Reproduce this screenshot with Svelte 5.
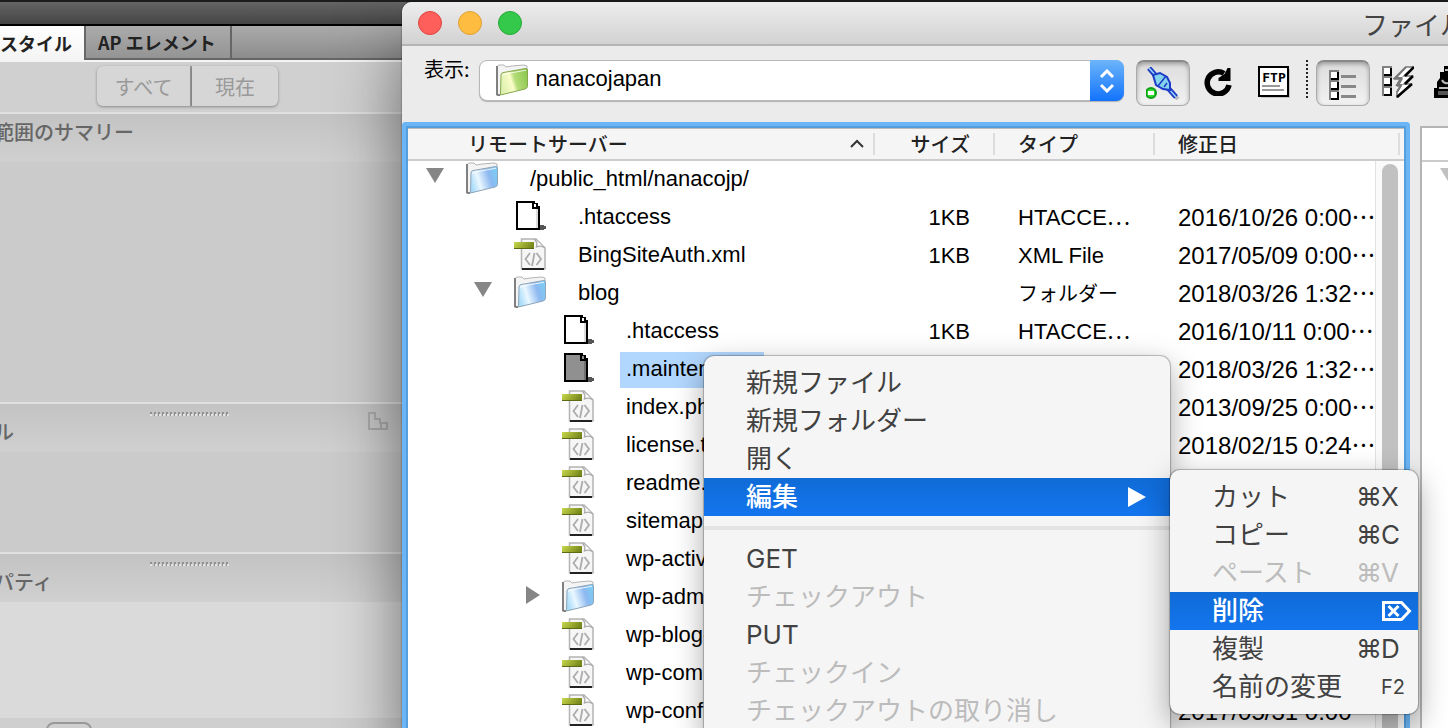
<script lang="ts">
    type Kind = "folder" | "blank" | "code";

    type Entry = {
        name: string;
        kind: Kind;
        level: number;
        open?: boolean;
        size?: string;
        type?: string;
        date?: string;
        selected?: boolean;
    };

    type Command = {
        label: string;
        key?: string;
        disabled?: boolean;
    };

    const entries: Entry[] = [
        { name: "/public_html/nanacojp/", kind: "folder", level: 0, open: true },
        { name: ".htaccess", kind: "blank", level: 1, size: "1KB", type: "HTACCE⋯", date: "2016/10/26 0:00⋯" },
        { name: "BingSiteAuth.xml", kind: "code", level: 1, size: "1KB", type: "XML File", date: "2017/05/09 0:00⋯" },
        { name: "blog", kind: "folder", level: 1, open: true, type: "フォルダー", date: "2018/03/26 1:32⋯" },
        { name: ".htaccess", kind: "blank", level: 2, size: "1KB", type: "HTACCE⋯", date: "2016/10/11 0:00⋯" },
        { name: ".maintenance", kind: "blank", level: 2, selected: true, date: "2018/03/26 1:32⋯" },
        { name: "index.php", kind: "code", level: 2, date: "2013/09/25 0:00⋯" },
        { name: "license.txt", kind: "code", level: 2, date: "2018/02/15 0:24⋯" },
        { name: "readme.html", kind: "code", level: 2 },
        { name: "sitemap.xml", kind: "code", level: 2 },
        { name: "wp-activate.php", kind: "code", level: 2 },
        { name: "wp-admin", kind: "folder", level: 2, open: false },
        { name: "wp-blog-header.php", kind: "code", level: 2 },
        { name: "wp-comments-post.php", kind: "code", level: 2 },
        { name: "wp-config.php", kind: "code", level: 2, date: "2017/05/31 0:00⋯" },
    ];

    const fileCommands: Command[] = [
        { label: "新規ファイル" },
        { label: "新規フォルダー" },
        { label: "開く" },
    ];

    const transferCommands: Command[] = [
        { label: "GET" },
        { label: "チェックアウト", disabled: true },
        { label: "PUT" },
        { label: "チェックイン", disabled: true },
        { label: "チェックアウトの取り消し", disabled: true },
    ];

    const editCommands: Command[] = [
        { label: "カット", key: "X" },
        { label: "コピー", key: "C" },
        { label: "ペースト", key: "V", disabled: true },
        { label: "削除" },
        { label: "複製", key: "D" },
        { label: "名前の変更" },
    ];

    let site = $state("nanacojapan");
</script>

{#snippet folder(tint: string)}
    <svg class="icon" viewBox="0 0 32 32" aria-hidden="true">
        <defs>
            <linearGradient id="face-{tint}" x1="0" y1="0.6" x2="1" y2="0.3">
                {#if tint === "green"}
                    <stop offset="0" stop-color="#dcf0b0" />
                    <stop offset="0.4" stop-color="#fafcc8" />
                    <stop offset="0.55" stop-color="#b4dc78" />
                    <stop offset="1" stop-color="#8cc850" />
                {:else}
                    <stop offset="0" stop-color="#a8dcfa" />
                    <stop offset="0.3" stop-color="#eaf7ff" />
                    <stop offset="0.7" stop-color="#8cb8f0" />
                    <stop offset="1" stop-color="#7cccf4" />
                {/if}
            </linearGradient>
        </defs>
        <path d="M1 31V2.5L3 1h5l2 2 3-.5L16 2l12-1 3 1v3L5 30z" fill="#f4f4f4" stroke="#b4b4b4" />
        <path d="M1 2v28.5L4 31.5" fill="none" stroke="#777" stroke-width="1.8" />
        <path
            d="M5 11Q5 9 7 8.6L29.5 4.5Q31.500 4.3 31.5 6V22.5Q31.5 24 29 25L4.5 31z"
            fill="url(#face-{tint})"
            stroke={tint === "green" ? "#88a850" : "#90a4b8"}
        />
        <path d="M6.5 12Q6.5 10.5 8 10.2L30 6.2" fill="none" stroke="#fff" stroke-opacity="0.8" />
    </svg>
{/snippet}

{#snippet blank(selected: boolean)}
    <svg class="icon" viewBox="0 0 32 32" shape-rendering="crispEdges" aria-hidden="true">
        <path d="M26 25h4v1h2v3h-2v1h-4z" fill="#555" />
        <path d="M3 2h17v2h3v3h2v22H3z" fill={selected ? "#909090" : "#fff"} stroke="#000" stroke-width="2" />
        <path d="M23 9v19" stroke={selected ? "#707070" : "#ddd"} stroke-width="2" />
        <path d="M18 2h3v2h3v2h2v3h-8z" fill="#000" />
        <path d="M20 4h2v3h-2z" fill={selected ? "#909090" : "#fff"} />
    </svg>
{/snippet}

{#snippet code()}
    <svg class="icon" viewBox="0 0 32 32" aria-hidden="true">
        <defs>
            <linearGradient id="ribbon" x1="0" y1="0" x2="1" y2="0.3">
                <stop offset="0" stop-color="#c8d84c" />
                <stop offset="1" stop-color="#78881c" />
            </linearGradient>
        </defs>
        <path d="M7.5 1H22L31 10v21H7.500z" fill="#f6f6f6" stroke="#b4b4b4" stroke-width="1.5" />
        <path d="M20 1q4 3 2.5 8 5-2 8.5 1" fill="#fff" stroke="#aaa" stroke-width="1.3" />
        <path d="M16 15l-4.500 6 4.500 6M22.500 15l4.500 6-4.500 6M20.500 15l-2.500 13" fill="none" stroke="#acacac" stroke-width="1.8" />
        <path d="M8 31h22" stroke="#222" stroke-width="2" />
        <path d="M0 4h20v7H0z" fill="url(#ribbon)" />
        <path d="M0 10.5h20" stroke="#5c6a14" />
    </svg>
{/snippet}

{#snippet commandItem(item: Command)}
    <li>
        <button class="command" disabled={item.disabled}>{item.label}</button>
    </li>
{/snippet}

<div class="desktop">
    <aside class="panel">
        <div class="panel-strip"></div>
        <div class="tabs" role="tablist">
            <button class="tab active" role="tab" aria-selected="true">スタイル</button>
            <button class="tab" role="tab" aria-selected="false">AP エレメント</button>
            <span class="tabs-rest"></span>
        </div>
        <div class="modes">
            <button class="mode" disabled>すべて</button>
            <button class="mode" disabled>現在</button>
        </div>
        <section class="summary">
            <h2>範囲のサマリー</h2>
        </section>
        <section class="rules">
            <h2>ル</h2>
            <span class="grip"></span>
            <svg class="cascade" viewBox="0 0 20 18" aria-hidden="true">
                <path d="M1 1h6v6h5v4h7v6H1zM13 11v6" fill="none" stroke="#aaa" stroke-width="2" />
            </svg>
        </section>
        <section class="properties">
            <h2>パティ</h2>
            <span class="grip"></span>
        </section>
        <footer class="panel-foot"><span class="foot-button"></span></footer>
    </aside>

    <main class="window">
        <header class="titlebar">
            <span class="light close"></span>
            <span class="light minimize"></span>
            <span class="light zoom"></span>
            <h1>ファイル</h1>
        </header>

        <div class="toolbar">
            <label class="site-label" for="site">表示:</label>
            <div class="site">
                <select id="site" bind:value={site}>
                    <option value="nanacojapan">nanacojapan</option>
                </select>
                <span class="site-icon">{@render folder("green")}</span>
                <span class="stepper">
                    <svg viewBox="0 0 16 24" aria-hidden="true">
                        <path d="M2 8l6-6 6 6M2 16l6 6 6-6" fill="none" stroke="#fff" stroke-width="3" />
                    </svg>
                </span>
            </div>
            <button class="tool pressed" aria-label="接続">
                <svg width="34" height="34" viewBox="0 0 34 34" aria-hidden="true">
                    <path d="M5 4l7 8M24 23l8 9" stroke="#888" stroke-opacity="0.5" stroke-width="4" />
                    <path d="M3 1l7 8M22 21l8 9" stroke="#1c3cc8" stroke-width="5" />
                    <path d="M3 1l7 8M22 21l8 9" stroke="#9cd4f4" stroke-width="1.5" />
                    <path d="M7 8L14 6l7 4 3 6v7l-7-1-7-4z" fill="#84d4ec" stroke="#1c3cc8" stroke-width="2" />
                    <path d="M20 9l-8 10M18 20l3-4" stroke="#1c3cc8" stroke-width="1.5" />
                    <circle cx="5" cy="26" r="5" fill="#30dc30" stroke="#10a018" stroke-width="2" />
                    <path d="M2 26h6" stroke="#fff" stroke-width="4" />
                </svg>
            </button>
            <button class="tool" aria-label="更新">
                <svg width="28" height="28" viewBox="0 0 28 28" aria-hidden="true">
                    <path d="M20 5.5A11 11 0 1 0 25 17" fill="none" stroke="#000" stroke-width="5.5" />
                    <path d="M26.5 0v13H14.5v-3l6-4 3-6z" fill="#000" />
                </svg>
            </button>
            <button class="tool" aria-label="FTP ログ">
                <svg width="32" height="32" viewBox="0 0 32 32" shape-rendering="crispEdges" aria-hidden="true">
                    <path d="M3 3h29v29H3z" fill="#c4c4c4" />
                    <path d="M1 1h29v29H1z" fill="#fff" stroke="#000" stroke-width="2" />
                    <text x="16" y="16" text-anchor="middle">FTP</text>
                    <path d="M4 20h18M4 24h22" stroke="#999" stroke-width="2" />
                </svg>
            </button>
            <span class="divider"></span>
            <button class="tool pressed" aria-label="ファイル一覧">
                <svg width="30" height="32" viewBox="0 0 30 32" shape-rendering="crispEdges" aria-hidden="true">
                    <path d="M2 3h8v8H2zM2 13h8v8H2zM2 23h8v8H2z" fill="#fff" stroke="#808080" stroke-width="2" />
                    <path d="M3 11h7V4M3 21h7v-7M3 31h7v-7" fill="none" stroke="#000" stroke-width="2" />
                    <path d="M13 8h15M13 18h15M13 28h15" stroke="#888" stroke-width="3" />
                </svg>
            </button>
            <button class="tool" aria-label="同期">
                <svg width="32" height="32" viewBox="0 0 32 32" aria-hidden="true">
                    <g fill="none" stroke-width="2" shape-rendering="crispEdges">
                        <path d="M1 1h8v8H1zM1 11h8v8H1zM1 21h8v8H1z" fill="#fff" stroke="#808080" />
                        <path d="M2 9h7V2M2 19h7v-7M2 29h7v-7" stroke="#000" />
                    </g>
                    <path d="M24 1h8L22 10h8l-8 8h7L15 32V26l4-6h-3l4-7h-7z" fill="#fff" stroke="#777" stroke-width="1.5" />
                    <path d="M32 1l-9 9M31 10l-8 8M30 18L15 31" fill="none" stroke="#000" stroke-width="2.5" />
                    <path d="M24 1L13 12h6l-4 7h4l-4 7" fill="none" stroke="#777" stroke-width="2" />
                </svg>
            </button>
            <button class="tool cut" aria-label="チェックアウト">
                <svg width="34" height="32" viewBox="0 0 34 32" aria-hidden="true">
                    <path d="M10 0h16v10h4v10h4v12H0V22h3v-6l3-4V6h4z" fill="#000" />
                    <path d="M11 4h6M8 14q2 4 6 3M5 22h10" fill="none" stroke="#bbb" stroke-width="2" />
                    <path d="M4 25h12v4H4z" fill="#555" />
                </svg>
            </button>
        </div>

        <div class="panes">
            <div class="remote">
                <div class="listing">
                    <table>
                        <colgroup>
                            <col />
                            <col class="col-size" />
                            <col class="col-type" />
                            <col class="col-date" />
                        </colgroup>
                        <thead>
                            <tr>
                                <th class="name">
                                    <div class="sortable">
                                        リモートサーバー
                                        <svg width="16" height="10" viewBox="0 0 16 10" aria-hidden="true">
                                            <path d="M2 8l6-6 6 6" fill="none" stroke="#333" stroke-width="2" />
                                        </svg>
                                    </div>
                                </th>
                                <th class="size">サイズ</th>
                                <th>タイプ</th>
                                <th class="last">修正日</th>
                            </tr>
                        </thead>
                        <tbody>
                            {#each entries as entry}
                                <tr>
                                    <td>
                                        <div class="entry level-{entry.level}">
                                            <span class="twisty">
                                                {#if entry.kind === "folder"}
                                                    <svg width="18" height="18" viewBox="0 0 18 18" aria-hidden="true">
                                                        <path d={entry.open ? "M0 0h18L9 15z" : "M4 0v18l14-9z"} fill="#868686" />
                                                    </svg>
                                                {/if}
                                            </span>
                                            {#if entry.kind === "folder"}
                                                {@render folder("blue")}
                                            {:else if entry.kind === "blank"}
                                                {@render blank(!!entry.selected)}
                                            {:else}
                                                {@render code()}
                                            {/if}
                                            <span class="entry-name" class:selected={entry.selected}>{entry.name}</span>
                                        </div>
                                    </td>
                                    <td class="size">{entry.size ?? ""}</td>
                                    <td class:kana={entry.type === "フォルダー"}>{entry.type ?? ""}</td>
                                    <td class="date">{entry.date ?? ""}</td>
                                </tr>
                            {/each}
                        </tbody>
                    </table>
                    <div class="scrollbar"><span class="thumb"></span></div>
                </div>
            </div>
            <div class="local">
                <div class="local-head"></div>
                <svg width="18" height="18" viewBox="0 0 18 18" aria-hidden="true">
                    <path d="M0 0h18L9 15z" fill="#c0c0c0" />
                </svg>
            </div>
        </div>
    </main>

    <ul class="menu context">
        {#each fileCommands as item}
            {@render commandItem(item)}
        {/each}
        <li class="parent">
            <button class="command current">
                編集
                <svg width="18" height="20" viewBox="0 0 18 20" aria-hidden="true">
                    <path d="M0 0v20l18-10z" fill="#fff" />
                </svg>
            </button>
            <ul class="menu submenu">
                {#each editCommands as item}
                    <li>
                        <button class="command" class:current={item.label === "削除"} disabled={item.disabled}>
                            {item.label}
                            <span class="shortcut">
                                {#if item.key}
                                    <span class="modifier">⌘</span><span class="key">{item.key}</span>
                                {:else if item.label === "削除"}
                                    <svg class="key" width="30" height="20" viewBox="0 0 30 20" aria-label="delete">
                                        <path d="M2 1.5h18L28 10l-8 8.5H2z" fill="none" stroke="#fff" stroke-width="3" />
                                        <path d="M7 5l10 10M17 5L7 15" stroke="#fff" stroke-width="3" />
                                    </svg>
                                {:else}
                                    <span class="key function">F2</span>
                                {/if}
                            </span>
                        </button>
                    </li>
                {/each}
            </ul>
        </li>
        <li class="separator" role="separator"></li>
        {#each transferCommands as item}
            {@render commandItem(item)}
        {/each}
    </ul>
</div>

<style>
    :global(body) {
        margin: 0;
        overflow: hidden;
    }

    .desktop {
        --ui: "Liberation Sans", "Noto Sans CJK JP", sans-serif;
        --jp: "Noto Sans CJK JP", sans-serif;
        position: relative;
        height: 100vh;
        overflow: hidden;
        background: #1f1c1d;
        font-family: var(--ui);
        font-size: 22px;
        color: #000;
    }

    button {
        padding: 0;
        border: 0;
        background: none;
        font: inherit;
        color: inherit;
    }

    ul {
        margin: 0;
        padding: 0;
        list-style: none;
    }

    /* CSS styles panel, runs off the left edge of the screen */
    .panel {
        position: absolute;
        inset: 2px 0 0 -6px;
        display: flex;
        flex-direction: column;
        background: #cbcbcb;
        font-family: var(--jp);
    }

    .panel > * {
        flex-shrink: 0;
    }

    .panel-strip {
        height: 22px;
        background: linear-gradient(#646464, #454545);
        border-bottom: 2px solid #000;
    }

    .tabs {
        display: flex;
        height: 34px;
        border-bottom: 2px solid #f4f4f4;
        font-size: 18px;
        font-weight: 700;
        color: #222;
    }

    .tab {
        padding: 0 14px 0 12px;
        background: linear-gradient(#ababab, #949494);
        border-right: 2px solid #666;
        border-bottom: 2px solid #666;
    }

    .tab.active {
        padding-left: 6px;
        padding-right: 12px;
        background: linear-gradient(#fff, #f4f4f4);
        border-bottom: 0;
    }

    .tabs-rest {
        flex: 1;
        background: linear-gradient(#ababab, #8c8c8c);
        border-bottom: 2px solid #666;
    }

    .modes {
        display: flex;
        height: 50px;
        box-sizing: border-box;
        padding: 4px 0 6px 103px;
        background: #d0d0d0;
    }

    .mode {
        width: 86px;
        background: #d6d6d6;
        border-radius: 0 6px 6px 0;
        box-shadow: 0 1px 3px rgba(0, 0, 0, 0.35);
        font-size: 20px;
        color: #999;
    }

    .mode:first-child {
        width: 95px;
        border-right: 2px solid #999;
        border-radius: 6px 0 0 6px;
    }

    section {
        position: relative;
        box-sizing: border-box;
        border-top: 2px solid #e0e0e0;
    }

    section h2 {
        height: 48px;
        box-sizing: border-box;
        margin: 0;
        padding-top: 3px;
        background: linear-gradient(#c3c3c3, #d0d0d0);
        font-size: 20px;
        font-weight: 500;
        line-height: 30px;
        color: #666;
    }

    .summary {
        height: 290px;
    }

    .rules,
    .properties {
        height: 150px;
    }

    .rules h2,
    .properties h2 {
        padding-top: 13px;
    }

    .properties {
        height: 166px;
        background: #dadada;
    }

    .grip {
        position: absolute;
        top: 8px;
        left: 156px;
        width: 79px;
        height: 2px;
        background: repeating-linear-gradient(90deg, #909090 0 2px, transparent 2px 4px);
        border-bottom: 2px dotted #e4e4e4;
    }

    .cascade {
        position: absolute;
        top: 8px;
        left: 374px;
        width: 20px;
    }

    .panel-foot {
        flex: 1;
        padding: 4px 0 0 52px;
        background: #cfcfcf;
    }

    .foot-button {
        display: block;
        width: 42px;
        height: 30px;
        border: 2px solid #999;
        border-radius: 8px;
    }

    /* Files window */
    .window {
        position: absolute;
        inset: 2px 0 0 402px;
        display: flex;
        flex-direction: column;
        background: #ebebeb;
        border-radius: 10px 0 0 0;
        box-shadow: 0 44px 68px rgba(0, 0, 0, 0.52), 0 0 2px rgba(0, 0, 0, 0.5);
    }

    .titlebar {
        display: flex;
        align-items: center;
        gap: 16px;
        height: 42px;
        padding-left: 16px;
        overflow: hidden;
        background: linear-gradient(#ededed, #d2d2d2);
        border-bottom: 2px solid #b4b4b4;
        border-radius: 10px 0 0 0;
    }

    .titlebar h1 {
        width: 86px;
        margin: 0 0 0 auto;
        font-family: var(--jp);
        font-size: 26px;
        font-weight: 400;
        white-space: nowrap;
        color: #444;
    }

    .light {
        width: 22px;
        height: 22px;
        border: 1px solid #e0443e;
        border-radius: 50%;
        background: #fe5f5a;
    }

    .minimize {
        border-color: #dea034;
        background: #febd40;
    }

    .zoom {
        border-color: #24a936;
        background: #35c94b;
    }

    .toolbar {
        display: flex;
        align-items: flex-start;
        height: 76px;
        box-sizing: border-box;
        padding: 14px 0 0 22px;
        overflow: hidden;
    }

    .site-label {
        margin-right: 9px;
        font-family: var(--jp);
        font-size: 20px;
        line-height: 18px;
        white-space: nowrap;
    }

    .site {
        position: relative;
        flex: 1;
        min-width: 0;
        margin-right: 12px;
    }

    .site select {
        width: 100%;
        height: 41px;
        padding: 0 40px 4px 56px;
        appearance: none;
        background: #fff;
        border: 1px solid #b8b8b8;
        border-radius: 8px;
        box-shadow: 0 1px 1px rgba(0, 0, 0, 0.25);
        font-family: var(--ui);
        font-size: 22px;
        color: #000;
    }

    .site-icon {
        position: absolute;
        top: 4px;
        left: 17px;
        pointer-events: none;
    }

    .stepper {
        position: absolute;
        top: 0;
        right: 0;
        display: grid;
        place-items: center;
        width: 34px;
        height: 41px;
        background: linear-gradient(#6db5fa, #1273fc);
        border-radius: 0 8px 8px 0;
        pointer-events: none;
    }

    .stepper svg {
        width: 16px;
    }

    .tool {
        display: grid;
        flex: none;
        place-items: center;
        height: 44px;
        margin-right: 14px;
    }

    .tool:nth-of-type(3) {
        margin: 0 16px 0 12px;
    }

    .tool text {
        font: 700 13px "DejaVu Sans Mono", monospace;
    }

    .tool.pressed {
        width: 54px;
        height: 46px;
        background: linear-gradient(#dcdcdc, #f2f2f2);
        border: 1px solid #aaa;
        border-top: 2px solid #888;
        border-radius: 8px;
        box-shadow: inset 0 2px 4px rgba(0, 0, 0, 0.3);
    }

    .divider + .tool {
        margin-right: 12px;
    }

    .divider {
        height: 38px;
        margin-right: 8px;
        border-left: 2px dotted #222;
    }

    .tool.cut {
        width: 14px;
        margin: 0 0 0 6px;
        justify-items: start;
    }

    .icon {
        display: block;
        flex: none;
        width: 32px;
        height: 32px;
    }

    .panes {
        display: flex;
        flex: 1;
        gap: 10px;
        min-height: 0;
    }

    /* two-tone focus ring around the active list */
    .remote {
        display: flex;
        flex: 1;
        min-width: 0;
        background: #559fdc;
        border: 4px solid #6bb5f6;
        border-bottom: 0;
        border-radius: 4px 4px 0 0;
    }

    .listing {
        position: relative;
        flex: 1;
        min-width: 0;
        margin: 2px 2px 0;
        overflow: hidden;
        background: #fff;
    }

    table {
        width: 100%;
        border-collapse: separate;
        border-spacing: 0;
        table-layout: fixed;
    }

    .col-size {
        width: 120px;
    }

    .col-type {
        width: 160px;
    }

    .col-date {
        width: 249px;
    }

    th {
        height: 33px;
        box-sizing: border-box;
        padding: 0 0 0 23px;
        background: linear-gradient(#ddd, #ddd) right 0 center / 2px 22px no-repeat #f5f5f5;
        border-top: 1px solid #bbb;
        border-bottom: 2px solid #ccc;
        font-family: var(--jp);
        font-size: 20px;
        font-weight: 500;
        line-height: 28px;
        text-align: left;
        color: #222;
    }

    th.name {
        padding: 0 10px 0 60px;
    }

    th.last {
        background-position: right 4px center;
    }

    .sortable {
        display: flex;
        align-items: center;
        justify-content: space-between;
    }

    td {
        height: 38px;
        padding: 0 0 0 23px;
        line-height: 34px;
        white-space: nowrap;
    }

    td:first-child {
        padding: 0;
    }

    th.size,
    td.size {
        padding: 0 25px 0 0;
        text-align: right;
    }

    td.date {
        font-size: 24px;
    }

    .kana {
        font-size: 20px;
    }

    .entry {
        display: flex;
        align-items: flex-start;
        height: 38px;
        box-sizing: border-box;
        padding: 1px 0 0 18px;
    }

    .level-1 {
        padding-left: 66px;
    }

    .level-2 {
        padding-left: 114px;
    }

    .twisty {
        width: 40px;
        padding-top: 6px;
        line-height: 0;
    }

    .entry-name {
        margin-left: 26px;
        padding: 0 6px 2px;
    }

    .entry-name.selected {
        background: #b2d7fe;
    }

    .scrollbar {
        position: absolute;
        top: 33px;
        right: 0;
        bottom: 0;
        width: 29px;
        box-sizing: border-box;
        padding: 3px 6px 0;
        background: #fafafa;
        border-left: 1px solid #e2e2e2;
    }

    .thumb {
        display: block;
        height: 100%;
        width: 16px;
        border-radius: 8px 8px 0 0;
        background: #c1c1c1;
    }

    .local {
        width: 28px;
        box-sizing: border-box;
        margin-top: 4px;
        overflow: hidden;
        background: #fff;
        border: solid #b4b4b4;
        border-width: 2px 0 0 2px;
    }

    .local-head {
        height: 32px;
        margin-bottom: 6px;
        border-bottom: 2px solid #ccc;
    }

    .local svg {
        display: block;
        margin-left: 18px;
    }

    /* Menus */
    .menu {
        position: absolute;
        padding: 8px 0;
        background: #f5f5f5;
        border-radius: 10px;
        box-shadow: 0 0 1px 1px rgba(0, 0, 0, 0.25), 0 10px 30px rgba(0, 0, 0, 0.35);
        font-family: Inter, "Noto Sans CJK JP", sans-serif;
        font-size: 26px;
        color: #414141;
    }

    .context {
        top: 356px;
        left: 704px;
        width: 466px;
    }

    .submenu {
        top: -8px;
        left: 100%;
        width: 248px;
    }

    .parent {
        position: relative;
    }

    .command {
        display: flex;
        align-items: center;
        justify-content: space-between;
        width: 100%;
        height: 38px;
        padding-left: 42px;
        line-height: 38px;
        white-space: nowrap;
    }

    .command:disabled {
        color: #bcbcbc;
    }

    .command.current {
        background: linear-gradient(#106bd6, #1375ee);
        font-weight: 500;
        color: #fff;
    }

    .parent > .command {
        padding-right: 24px;
    }

    .shortcut {
        display: flex;
        align-items: center;
        padding-right: 6px;
    }

    .modifier {
        width: 25px;
    }

    .key {
        width: 31px;
        text-align: left;
    }

    .function {
        font-size: 20px;
    }

    .separator {
        height: 4px;
        margin: 10px 0;
        background: #e4e4e4;
    }
</style>
